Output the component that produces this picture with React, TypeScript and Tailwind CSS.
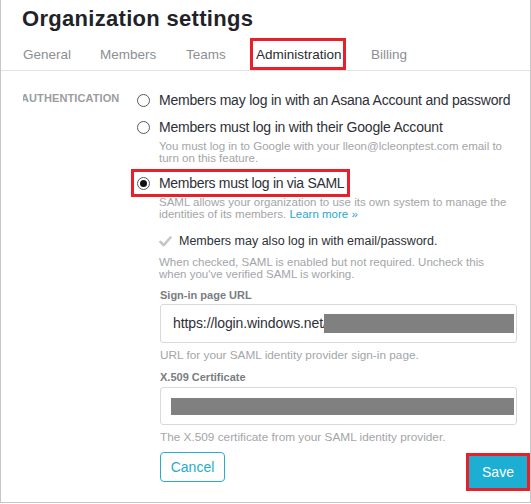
import React from 'react';

const font = { fontFamily: '"Liberation Sans", Arial, sans-serif' };

const Radio: React.FC<{ checked?: boolean }> = ({ checked }) => (
    <span className="flex h-[13px] w-[13px] shrink-0 items-center justify-center rounded-full border border-[#555a60] bg-white">
        {checked && <span className="h-[7px] w-[7px] rounded-full bg-[#111]" />}
    </span>
);

const App: React.FC = () => {
    return (
        <div
            className="relative h-[503px] w-[531px] overflow-hidden border-x border-b border-[#c6c6c6] bg-white"
            style={font}
        >
            {/* header */}
            <div className="px-[21px] pt-[4px]">
                <h1 className="text-[22px] font-bold leading-[30px] tracking-[0.3px] text-[#1f2329]">
                    Organization settings
                </h1>
                <nav className="mt-[6px] flex h-[30px] items-center text-[13.5px] text-[#8c8f93]">
                    <span className="w-[78px] pl-[1px]">General</span>
                    <span className="w-[86px]">Members</span>
                    <span className="w-[70px]">Teams</span>
                    <span className="w-[115px]">
                        <span className="relative text-[#2a2d31]">
                            Administration
                            <span className="absolute -left-[6px] -right-[4px] -top-[9px] -bottom-[8px] border-[3px] border-[#e8202a]" />
                        </span>
                    </span>
                    <span>Billing</span>
                </nav>
            </div>
            <div className="h-px w-full bg-[#e3e3e3]" />

            <div className="flex">
                <div className="w-[136px] shrink-0 pt-[20px]">
                    <div className="ml-[22px] overflow-hidden">
                        <span className="-ml-[2px] block text-[11px] font-bold uppercase leading-[14px] tracking-[0.1px] text-[#9a9da1]">
                            Authentication
                        </span>
                    </div>
                </div>

                <div className="min-w-0 flex-1 whitespace-nowrap">
                    <div className="mt-[19px] flex h-[20px] items-center gap-[9px] text-[14px] tracking-[-0.2px] text-[#2d3036]">
                        <Radio />
                        <span>Members may log in with an Asana Account and password</span>
                    </div>
                    <div className="mt-[7px] flex h-[20px] items-center gap-[9px] text-[14px] tracking-[-0.2px] text-[#2d3036]">
                        <Radio />
                        <span>Members must log in with their Google Account</span>
                    </div>
                    <p className="mt-[3px] pl-[22px] text-[11.5px] leading-[12px] text-[#a3a5a8]">
                        You must log in to Google with your lleon@lcleonptest.com email to
                        <br />
                        turn on this feature.
                    </p>

                    <div className="mt-[9px] flex h-[20px]">
                        <div className="relative flex items-center gap-[9px] text-[14px] tracking-[-0.3px] text-[#2d3036]">
                            <Radio checked />
                            <span>Members must log in via SAML</span>
                            <span className="absolute -left-[6px] -right-[6px] -top-[4px] -bottom-[4px] border-[3px] border-[#e8202a]" />
                        </div>
                    </div>
                    <p className="mt-[3px] pl-[22px] text-[11.5px] leading-[12px] text-[#a3a5a8]">
                        SAML allows your organization to use its own system to manage the
                        <br />
                        identities of its members. <span className="text-[#2aa7d1]">Learn more »</span>
                    </p>

                    <div className="mt-[13px] flex h-[16px] items-center gap-[7px] pl-[22px] text-[12.5px] text-[#2d3036]">
                        <svg width="13" height="11" viewBox="0 0 13 11">
                            <path d="M1.5 6 L4.8 9.2 L11.5 1.5" fill="none" stroke="#c5c6c8" strokeWidth="2.6" strokeLinecap="round" strokeLinejoin="round" />
                        </svg>
                        <span>Members may also log in with email/password.</span>
                    </div>
                    <p className="mt-[7px] pl-[22px] text-[11.5px] leading-[12px] text-[#a3a5a8]">
                        When checked, SAML is enabled but not required. Uncheck this
                        <br />
                        when you've verified SAML is working.
                    </p>

                    <div className="pl-[23px]">
                        <div className="mt-[9px] text-[11px] font-bold leading-[12px] text-[#7a7d82]">Sign-in page URL</div>
                        <div className="mt-[3px] flex h-[39px] w-[357px] items-center rounded-[3px] border border-[#d9d9d9] pl-[12px] text-[14px] tracking-[-0.1px] text-[#2d3036]">
                            <span>https://login.windows.net/</span>
                            <span className="-ml-[3px] mr-[2px] h-[19px] flex-1 bg-[#808080]" />
                        </div>
                        <div className="mt-[6px] text-[11.8px] leading-[12px] text-[#a3a5a8]">URL for your SAML identity provider sign-in page.</div>
                        <div className="mt-[10px] text-[11px] font-bold leading-[12px] text-[#7a7d82]">X.509 Certificate</div>
                        <div className="mt-[4px] h-[38px] w-[357px] rounded-[3px] border border-[#d9d9d9] pl-[10px] pr-[2px] pt-[10px]">
                            <div className="h-[17px] bg-[#808080]" />
                        </div>
                        <div className="mt-[6px] text-[11.8px] leading-[12px] text-[#a3a5a8]">The X.509 certificate from your SAML identity provider.</div>

                        <div className="mt-[9px] flex w-[367px] items-start justify-between">
                            <button className="h-[30px] w-[65px] rounded-[4px] border border-[#2aaccf] text-[14px] text-[#2aaccf]">
                                Cancel
                            </button>
                            <div className="relative mt-[4px]">
                                <button className="h-[32px] w-[58px] bg-[#1caed3] text-[14px] text-white">Save</button>
                                <span className="absolute -left-[3px] -right-[3px] -top-[3px] -bottom-[3px] border-[3px] border-[#e8202a]" />
                            </div>
                        </div>
                    </div>
                </div>
            </div>
        </div>
    );
};

export default App;
